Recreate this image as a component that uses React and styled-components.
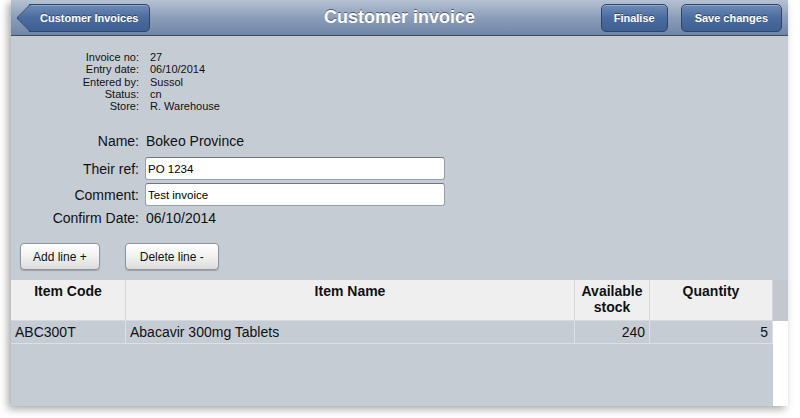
import React from 'react';
import styled, { createGlobalStyle } from 'styled-components';

const GlobalStyle = createGlobalStyle`
  html, body {
    margin: 0;
    padding: 0;
    background: #ffffff;
    font-family: 'Liberation Sans', Arial, sans-serif;
  }
`;

const Page = styled.div`
  width: 800px;
  height: 418px;
  overflow: hidden;
  background: #fff;
`;

const Window = styled.div`
  margin-left: 11px;
  width: 777px;
  height: 406px;
  display: flex;
  flex-direction: column;
  background: #c6ccd4;
  box-shadow: -3px 3px 8px rgba(0, 0, 0, 0.35);
`;

const Header = styled.div`
  height: 36px;
  flex-shrink: 0;
  display: grid;
  grid-template-columns: 1fr auto 1fr;
  align-items: center;
  padding: 0 6px 0 6px;
  background: linear-gradient(#b6c2d2, #8b9db8 50%, #7086a7);
  border-bottom: 1px solid #3d4a5c;
  box-sizing: border-box;
`;

const Title = styled.h1`
  margin: 0;
  font-size: 18px;
  font-weight: bold;
  color: #fff;
  text-shadow: 0 -1px 0 rgba(40, 55, 80, 0.7);
`;

const Right = styled.div`
  display: flex;
  justify-content: flex-end;
  gap: 13px;
`;

const NavButton = styled.button`
  position: relative;
  height: 28px;
  padding: 0 ${(p) => p.$pad || 10}px;
  margin-left: ${(p) => (p.$back ? '12px' : '0')};
  border: 1px solid #2f466b;
  border-radius: 5px;
  background: linear-gradient(#6f8cb8, #4a6b9d 50%, #3e5f92);
  color: #fff;
  font-family: 'Liberation Sans', Arial, sans-serif;
  font-size: 11px;
  font-weight: bold;
  text-shadow: 0 -1px 0 rgba(0, 0, 0, 0.4);
  box-shadow: inset 0 1px 0 rgba(255, 255, 255, 0.25);
  cursor: pointer;

  ${(p) =>
    p.$back &&
    `
    border-left: none;
    border-radius: 0 5px 5px 0;
    &::before {
      content: '';
      position: absolute;
      left: -9px;
      top: 3px;
      width: 19px;
      height: 19px;
      transform: rotate(45deg);
      background: linear-gradient(135deg, #6f8cb8, #4a6b9d 50%, #3e5f92);
      border-left: 1px solid #2f466b;
      border-bottom: 1px solid #2f466b;
      border-radius: 0 0 0 3px;
    }
    span { position: relative; }
  `}
`;

const Body = styled.div`
  flex: 1;
  display: flex;
  flex-direction: column;
`;

const Info = styled.div`
  display: grid;
  grid-template-columns: 128px 1fr;
  column-gap: 11px;
  padding-top: 15px;
  font-size: 11px;
  line-height: 12.3px;
  color: #111;
`;

const InfoLabel = styled.div`
  text-align: right;
`;

const Form = styled.div`
  display: grid;
  grid-template-columns: 128px 300px;
  column-gap: 6px;
  row-gap: 3px;
  align-items: center;
  margin-top: 16px;
  font-size: 14px;
  color: #111;
`;

const FormLabel = styled.div`
  text-align: right;
  height: ${(p) => p.$h || 22}px;
  line-height: ${(p) => p.$h || 22}px;
`;

const FormValue = styled.div`
  height: ${(p) => p.$h || 22}px;
  line-height: ${(p) => p.$h || 22}px;
  padding-left: 1px;
`;

const Input = styled.input`
  box-sizing: border-box;
  width: 300px;
  height: ${(p) => p.$h || 23}px;
  padding: 0 2px;
  border: 1px solid #9aa0a8;
  border-top-color: #6f757d;
  border-radius: 3px;
  background: #fff;
  font-family: 'Liberation Sans', Arial, sans-serif;
  font-size: 11.5px;
  color: #000;
  outline: none;
`;

const Actions = styled.div`
  display: flex;
  gap: 25px;
  padding: 16px 0 0 9px;
`;

const ActionButton = styled.button`
  height: 27px;
  padding: 0 ${(p) => p.$pad || 12}px;
  border: 1px solid #8e949c;
  border-radius: 4px;
  background: linear-gradient(#ffffff, #f1f1f1 50%, #dcdcdc);
  box-shadow: 0 1px 1px rgba(0, 0, 0, 0.2);
  font-family: 'Liberation Sans', Arial, sans-serif;
  font-size: 12px;
  color: #111;
  cursor: pointer;
`;

const Table = styled.div`
  margin-top: 10px;
  display: grid;
  grid-template-columns: 115px 449px 75px 123px 15px;
  font-size: 14px;
  color: #111;
  flex: 1;
  grid-template-rows: 41px 23px 1fr;
`;

const HeadCell = styled.div`
  background: #efefef;
  border-right: 1px solid #d8d8d8;
  border-bottom: 1px solid #d6dae0;
  font-weight: bold;
  text-align: center;
  padding-top: 3px;
  line-height: 16px;
`;

const Cell = styled.div`
  border-right: 1px solid #dde0e5;
  border-bottom: 1px solid #dde0e5;
  padding: 0 4px;
  line-height: 22px;
  text-align: ${(p) => (p.$right ? 'right' : 'left')};
`;

const Gutter = styled.div`
  background: ${(p) => (p.$head ? '#c3c8cf' : '#ffffff')};
  grid-row: ${(p) => (p.$head ? 'auto' : 'span 2')};
`;

const Filler = styled.div`
  grid-column: span 4;
`;

export default function App() {
  const info = [
    ['Invoice no:', '27'],
    ['Entry date:', '06/10/2014'],
    ['Entered by:', 'Sussol'],
    ['Status:', 'cn'],
    ['Store:', 'R. Warehouse'],
  ];

  return (
    <>
      <GlobalStyle />
      <Page>
        <Window>
          <Header>
            <div>
              <NavButton $back $pad={11}>
                <span>Customer Invoices</span>
              </NavButton>
            </div>
            <Title>Customer invoice</Title>
            <Right>
              <NavButton $pad={12}>Finalise</NavButton>
              <NavButton $pad={13}>Save changes</NavButton>
            </Right>
          </Header>
          <Body>
            <Info>
              {info.map(([label, value]) => (
                <React.Fragment key={label}>
                  <InfoLabel>{label}</InfoLabel>
                  <div>{value}</div>
                </React.Fragment>
              ))}
            </Info>
            <Form>
              <FormLabel $h={26}>Name:</FormLabel>
              <FormValue $h={26}>Bokeo Province</FormValue>
              <FormLabel>Their ref:</FormLabel>
              <Input defaultValue="PO 1234" />
              <FormLabel>Comment:</FormLabel>
              <Input defaultValue="Test invoice" />
              <FormLabel $h={18}>Confirm Date:</FormLabel>
              <FormValue $h={18}>06/10/2014</FormValue>
            </Form>
            <Actions>
              <ActionButton $pad={12}>Add line +</ActionButton>
              <ActionButton $pad={14}>Delete line -</ActionButton>
            </Actions>
            <Table>
              <HeadCell>Item Code</HeadCell>
              <HeadCell>Item Name</HeadCell>
              <HeadCell>
                Available
                <br />
                stock
              </HeadCell>
              <HeadCell>Quantity</HeadCell>
              <Gutter $head />
              <Cell>ABC300T</Cell>
              <Cell>Abacavir 300mg Tablets</Cell>
              <Cell $right>240</Cell>
              <Cell $right>5</Cell>
              <Gutter />
              <Filler />
            </Table>
          </Body>
        </Window>
      </Page>
    </>
  );
}
